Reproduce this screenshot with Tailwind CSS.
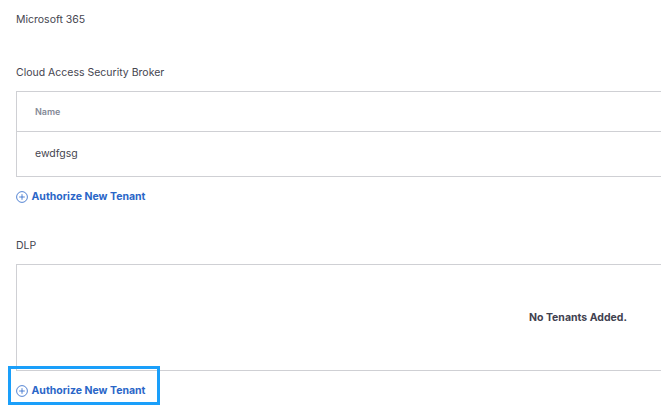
<!DOCTYPE html>
<html>
<head>
<meta charset="utf-8">
<script src="https://cdn.jsdelivr.net/npm/@tailwindcss/browser@4"></script>
</head>
<body class="bg-white overflow-hidden">
<div class="relative w-[661px] h-[409px] overflow-hidden pl-4 pt-[13px] font-['Inter',sans-serif] text-[10.5px] leading-[14px] text-[#45454f]">
  <div>Microsoft 365</div>
  <div class="mt-[39px]">Cloud Access Security Broker</div>
  <div class="mt-[11px] w-[700px] h-[86px] border border-[#cfd0d4] flex flex-col">
    <div class="h-[40px] flex items-center pl-[18px] border-b border-[#cfd0d4] text-[9px] font-semibold text-[#858a97]">Name</div>
    <div class="flex-1 flex items-center pl-[18px]">ewdfgsg</div>
  </div>
  <div class="mt-[13px] flex items-center gap-[3.5px] text-[#2a66c8] font-bold">
    <svg class="w-[12px] h-[12px]" viewBox="0 0 12 12" fill="none" stroke="#2a66c8" stroke-width="0.8"><circle cx="6" cy="6" r="5.4"/><path d="M6 3.2v5.6M3.2 6h5.6"/></svg>
    <span>Authorize New Tenant</span>
  </div>
  <div class="mt-[35px]">DLP</div>
  <div class="mt-[11px] w-[700px] h-[107px] border border-[#cfd0d4] flex items-center pl-[512px] font-bold text-[#41414f]">No Tenants Added.</div>
  <div class="mt-[13px] flex items-center gap-[3.5px] text-[#2a66c8] font-bold">
    <svg class="w-[12px] h-[12px]" viewBox="0 0 12 12" fill="none" stroke="#2a66c8" stroke-width="0.8"><circle cx="6" cy="6" r="5.4"/><path d="M6 3.2v5.6M3.2 6h5.6"/></svg>
    <span>Authorize New Tenant</span>
  </div>
  <div class="absolute left-[8px] top-[366px] w-[152px] h-[39px] border-[3px] border-[#1a9ffa]"></div>
</div>
</body>
</html>
